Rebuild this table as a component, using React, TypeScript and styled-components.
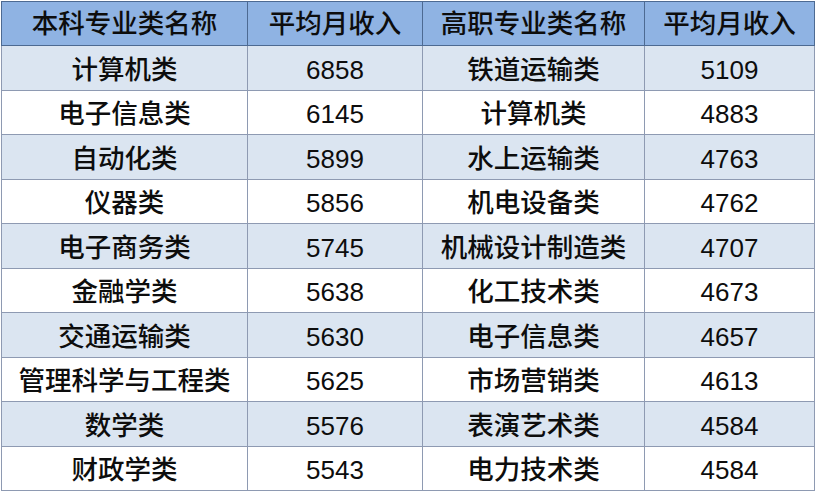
import styled, { createGlobalStyle } from 'styled-components';

const GlobalStyle = createGlobalStyle`
  html, body {
    margin: 0;
    padding: 0;
    background: #ffffff;
  }
`;

const Page = styled.div`
  padding: 1px 0 0 1px;
`;

const Table = styled.table`
  width: 813px;
  border-collapse: collapse;
  table-layout: fixed;
  font-family: "Liberation Sans", "Noto Sans CJK SC", sans-serif;
  font-size: 26.5px;
  font-weight: 500;
  color: #0d0d0d;
`;

const HeadCell = styled.th`
  height: 42px;
  padding: 1px 0 0;
  background: #8fb3e3;
  border: 1px solid #4d6a92;
  font-weight: 500;
  text-align: center;
  vertical-align: middle;
  line-height: 1;
`;

const Row = styled.tr<{ $shaded: boolean }>`
  background: ${({ $shaded }) => ($shaded ? '#dbe5f1' : '#ffffff')};
`;

const Cell = styled.td`
  height: 39.5px;
  padding: 4px 0 0;
  border: 1px solid #8e9ab2;
  text-align: center;
  vertical-align: middle;
  line-height: 1;
`;

const Num = styled.span`
  font-size: 26px;
  font-weight: 400;
`;

const rows: [string, string, string, string][] = [
  ['计算机类', '6858', '铁道运输类', '5109'],
  ['电子信息类', '6145', '计算机类', '4883'],
  ['自动化类', '5899', '水上运输类', '4763'],
  ['仪器类', '5856', '机电设备类', '4762'],
  ['电子商务类', '5745', '机械设计制造类', '4707'],
  ['金融学类', '5638', '化工技术类', '4673'],
  ['交通运输类', '5630', '电子信息类', '4657'],
  ['管理科学与工程类', '5625', '市场营销类', '4613'],
  ['数学类', '5576', '表演艺术类', '4584'],
  ['财政学类', '5543', '电力技术类', '4584'],
];

export default function App() {
  return (
    <Page>
      <GlobalStyle />
      <Table>
        <colgroup>
          <col style={{ width: 246 }} />
          <col style={{ width: 175 }} />
          <col style={{ width: 222 }} />
          <col style={{ width: 170 }} />
        </colgroup>
        <thead>
          <tr>
            <HeadCell>本科专业类名称</HeadCell>
            <HeadCell>平均月收入</HeadCell>
            <HeadCell>高职专业类名称</HeadCell>
            <HeadCell>平均月收入</HeadCell>
          </tr>
        </thead>
        <tbody>
          {rows.map((r, i) => (
            <Row key={i} $shaded={i % 2 === 0}>
              <Cell>{r[0]}</Cell>
              <Cell><Num>{r[1]}</Num></Cell>
              <Cell>{r[2]}</Cell>
              <Cell><Num>{r[3]}</Num></Cell>
            </Row>
          ))}
        </tbody>
      </Table>
    </Page>
  );
}
